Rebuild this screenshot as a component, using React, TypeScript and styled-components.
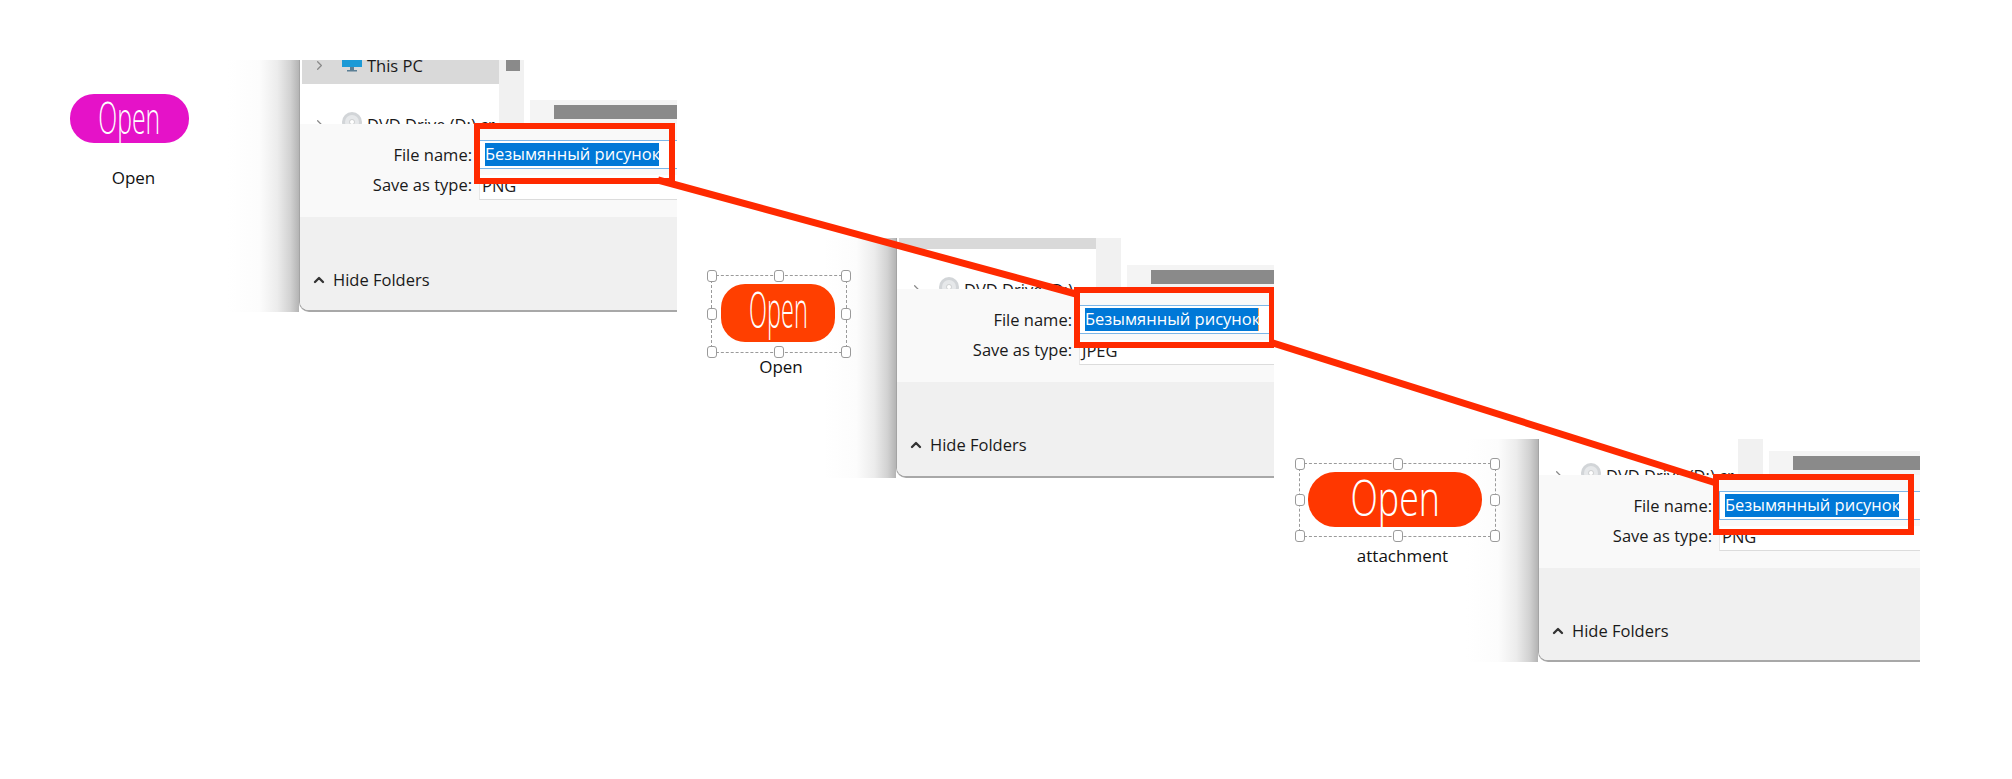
import React from "react";
import styled, { createGlobalStyle } from "styled-components";
import { ChevronRight, ChevronUp } from "lucide-react";

const GlobalStyle = createGlobalStyle`
  html, body {
    margin: 0;
    background: #fff;
    overflow: hidden;
  }
  * {
    box-sizing: border-box;
  }
`;

const Canvas = styled.div`
  position: relative;
  width: 2012px;
  height: 779px;
  font-family: "Open Sans", "Liberation Sans", sans-serif;
  color: #1a1a1a;
`;

// pasted screenshots and widgets sit on a free slide canvas
const Placed = styled.div<{ $x: number; $y: number }>`
  position: absolute;
  left: ${(p) => p.$x}px;
  top: ${(p) => p.$y}px;
`;

const Crop = styled.div<{ $height: number }>`
  display: flex;
  height: ${(p) => p.$height}px;
`;
const Shade = styled.div`
  width: 72px;
  background: linear-gradient(to right, #fff 0%, #fcfcfc 45%, #ececec 70%, #d2d2d2 88%, #b4b4b4 100%);
`;
const Dialog = styled.div<{ $width: number }>`
  display: flex;
  flex-direction: column;
  width: ${(p) => p.$width}px;
  border-left: 1px solid #a4a4a4;
  border-bottom: 2px solid #a8a8a8;
  border-bottom-left-radius: 10px;
  background: #fff;
  overflow: hidden;
`;

const TopArea = styled.div`
  display: flex;
  flex: 1;
  min-height: 0;
`;
const NavColumn = styled.div`
  display: flex;
  flex-direction: column;
  justify-content: flex-end;
  width: 199px;
  padding-left: 2px;
  overflow: hidden;
`;
const NavRow = styled.div<{ $selected?: boolean }>`
  display: flex;
  flex: none;
  align-items: center;
  height: 38px;
  padding-left: 10px;
  font-size: 16.5px;
  white-space: nowrap;
  background: ${(p) => (p.$selected ? "#d9d9d9" : "transparent")};
  margin-bottom: ${(p) => (p.$selected ? "21px" : "-19px")};

  svg {
    flex: none;
  }
`;
const NavIcon = styled.svg`
  width: 20px;
  height: 20px;
  margin: 0 5px 4px 15px;
`;
const Track = styled.div`
  display: flex;
  flex-direction: column;
  justify-content: flex-end;
  width: 25px;
  padding: 0 4px 53px 7px;
  background: #f1f1f1;
  overflow: hidden;
`;
const Thumb = styled.div`
  flex: none;
  height: 40px;
  background: #8a8a8a;
`;
const RightPane = styled.div`
  align-self: flex-end;
  flex: 1;
  height: 24px;
  margin-left: 6px;
  padding: 5px 0 0 24px;
  background: #f4f4f4;
`;
const GreyBar = styled.div`
  height: 14px;
  background: #8a8a8a;
`;

const FormPanel = styled.div`
  position: relative;
  flex: none;
  height: 93px;
  padding-top: 16px;
  background: #f9f9f9;
`;
const FormRow = styled.div<{ $labelWidth: number }>`
  display: grid;
  grid-template-columns: ${(p) => p.$labelWidth}px 1fr;
  column-gap: 7px;
  align-items: center;
`;
const FieldLabel = styled.div`
  text-align: right;
  font-size: 16.5px;
  line-height: 20px;
  white-space: nowrap;
`;
const NameInput = styled.div`
  display: flex;
  align-items: center;
  height: 29px;
  padding-left: 5px;
  border: 1px solid #7cb6e8;
  border-right: 0;
  background: #fff;
`;
const Selected = styled.span<{ $caret?: boolean }>`
  width: 174px;
  height: 23px;
  font-size: 16.5px;
  line-height: 22px;
  color: #fff;
  white-space: nowrap;
  background: #0078d7;
  border-right: ${(p) => (p.$caret ? "1px solid #f2a65a" : "0")};
`;
const TypeSelect = styled.div`
  height: 25px;
  margin-top: 6px;
  padding-left: 2px;
  font-size: 16.5px;
  line-height: 22px;
  border-bottom: 1px solid #dcdcdc;
  border-left: 1px solid #e8e8e8;
  background: #fff;
`;
const Highlight = styled.div<{ $x: number; $y: number }>`
  position: absolute;
  left: ${(p) => p.$x}px;
  top: ${(p) => p.$y}px;
  width: 201px;
  height: 61px;
  border: 6px solid #ff2a00;
`;

const Footer = styled.div<{ $height: number }>`
  flex: none;
  display: flex;
  align-items: flex-start;
  gap: 6px;
  height: ${(p) => p.$height}px;
  padding: 52px 0 0 11px;
  font-size: 16.5px;
  line-height: 22px;
  background: #f0f0f0;
`;
const FooterChevron = styled(ChevronUp)`
  margin-top: 3px;
`;

const Frame = styled.div<{ $selected?: boolean; $pad?: string }>`
  position: relative;
  padding: ${(p) => p.$pad ?? "0"};
  border: ${(p) => (p.$selected ? "1px dashed #9a9a9a" : "0")};
`;
const Handle = styled.span<{ $col: number; $row: number }>`
  position: absolute;
  left: ${(p) => p.$col * 50}%;
  top: ${(p) => p.$row * 50}%;
  width: 10px;
  height: 12px;
  margin: -6px 0 0 -5px;
  border: 1px solid #9a9a9a;
  border-radius: 3px;
  background: #fff;
`;
const PillButton = styled.div<{ $w: number; $h: number; $color: string; $radius: number }>`
  display: flex;
  align-items: center;
  justify-content: center;
  width: ${(p) => p.$w}px;
  height: ${(p) => p.$h}px;
  border-radius: ${(p) => p.$radius}px;
  background: ${(p) => p.$color};
  overflow: hidden;
`;
const PillText = styled.span<{ $size: number; $stretch: number; $dy: number }>`
  display: block;
  font-size: ${(p) => p.$size}px;
  font-weight: 300;
  line-height: 1;
  color: #fff;
  transform: translateY(${(p) => p.$dy}px) scaleX(${(p) => p.$stretch});
`;
const Caption = styled.div<{ $gap: number; $shift: number }>`
  margin-top: ${(p) => p.$gap}px;
  padding-left: ${(p) => p.$shift}px;
  text-align: center;
  font-size: 17px;
  line-height: 22px;
  color: #111;
`;

const Connectors = styled.svg`
  position: absolute;
  left: 0;
  top: 0;
  width: 2012px;
  height: 779px;
  pointer-events: none;
`;

const MonitorIcon = () => (
  <NavIcon viewBox="0 0 20 20">
    <rect x="0" y="0" width="20" height="14" fill="#1c9ad6" />
    <rect x="8" y="14" width="4" height="3" fill="#5b7f95" />
    <rect x="5" y="17" width="10" height="1.5" fill="#5b7f95" />
  </NavIcon>
);

const DiscIcon = () => (
  <NavIcon viewBox="0 0 20 20">
    <circle cx="10" cy="10" r="10" fill="#d2d5d8" />
    <circle cx="10" cy="10" r="7" fill="#e6e8ea" />
    <circle cx="10" cy="10" r="2.5" fill="#fff" stroke="#b5b8bb" strokeWidth="0.6" />
  </NavIcon>
);

const scenes = [
  { x: 227, y: 60, width: 378, height: 252, footer: 93, label: 172, type: "PNG", boxX: 174, boxY: -1 },
  { x: 824, y: 238, width: 378, height: 240, footer: 94, label: 175, type: "JPEG", boxX: 177, boxY: -2, caret: true },
  { x: 1466, y: 439, width: 382, height: 223, footer: 92, label: 173, type: "PNG", boxX: 174, boxY: -1 },
];

const handles = [
  [0, 0], [1, 0], [2, 0],
  [0, 1], [2, 1],
  [0, 2], [1, 2], [2, 2],
];

const widgets = [
  {
    x: 70, y: 94, w: 119, h: 49, color: "#e512c8", radius: 24, size: 45, stretch: 0.55, dy: -2,
    caption: "Open", gap: 24, shift: 8, selected: false, pad: "0",
  },
  {
    x: 711, y: 275, w: 114, h: 58, color: "#ff3f00", radius: 24, size: 50, stretch: 0.47, dy: -4,
    caption: "Open", gap: 3, shift: 4, selected: true, pad: "8px 11px 10px 9px",
  },
  {
    x: 1299, y: 463, w: 174, h: 55, color: "#ff3700", radius: 27, size: 49, stretch: 0.73, dy: -2,
    caption: "attachment", gap: 8, shift: 10, selected: true, pad: "8px 13px 9px 8px",
  },
];

function App() {
  return (
    <Canvas>
      <GlobalStyle />
      {scenes.map((s) => (
        <Placed key={s.x} $x={s.x} $y={s.y}>
          <Crop $height={s.height}>
            <Shade />
            <Dialog $width={s.width}>
              <TopArea>
                <NavColumn>
                  <NavRow $selected>
                    <ChevronRight size={15} color="#8a8a8a" />
                    <MonitorIcon />
                    This PC
                  </NavRow>
                  <NavRow>
                    <ChevronRight size={15} color="#8a8a8a" />
                    <DiscIcon />
                    DVD Drive (D:) cr
                  </NavRow>
                </NavColumn>
                <Track>
                  <Thumb />
                </Track>
                <RightPane>
                  <GreyBar />
                </RightPane>
              </TopArea>
              <FormPanel>
                <FormRow $labelWidth={s.label}>
                  <FieldLabel>File name:</FieldLabel>
                  <NameInput>
                    <Selected $caret={s.caret}>Безымянный рисунок</Selected>
                  </NameInput>
                </FormRow>
                <FormRow $labelWidth={s.label}>
                  <FieldLabel>Save as type:</FieldLabel>
                  <TypeSelect>{s.type}</TypeSelect>
                </FormRow>
                <Highlight $x={s.boxX} $y={s.boxY} />
              </FormPanel>
              <Footer $height={s.footer}>
                <FooterChevron size={16} strokeWidth={3.5} color="#333" />
                Hide Folders
              </Footer>
            </Dialog>
          </Crop>
        </Placed>
      ))}

      {widgets.map((w) => (
        <Placed key={w.x} $x={w.x} $y={w.y}>
          <Frame $selected={w.selected} $pad={w.pad}>
            <PillButton $w={w.w} $h={w.h} $color={w.color} $radius={w.radius}>
              <PillText $size={w.size} $stretch={w.stretch} $dy={w.dy}>
                Open
              </PillText>
            </PillButton>
            {w.selected &&
              handles.map(([c, r]) => <Handle key={`${c}-${r}`} $col={c} $row={r} />)}
          </Frame>
          <Caption $gap={w.gap} $shift={w.shift}>
            {w.caption}
          </Caption>
        </Placed>
      ))}

      <Connectors viewBox="0 0 2012 779">
        <line x1="658" y1="180" x2="1076" y2="294" stroke="#ff2a00" strokeWidth="7" />
        <line x1="1270" y1="342" x2="1716" y2="483" stroke="#ff2a00" strokeWidth="7" />
      </Connectors>
    </Canvas>
  );
}

export default App;
